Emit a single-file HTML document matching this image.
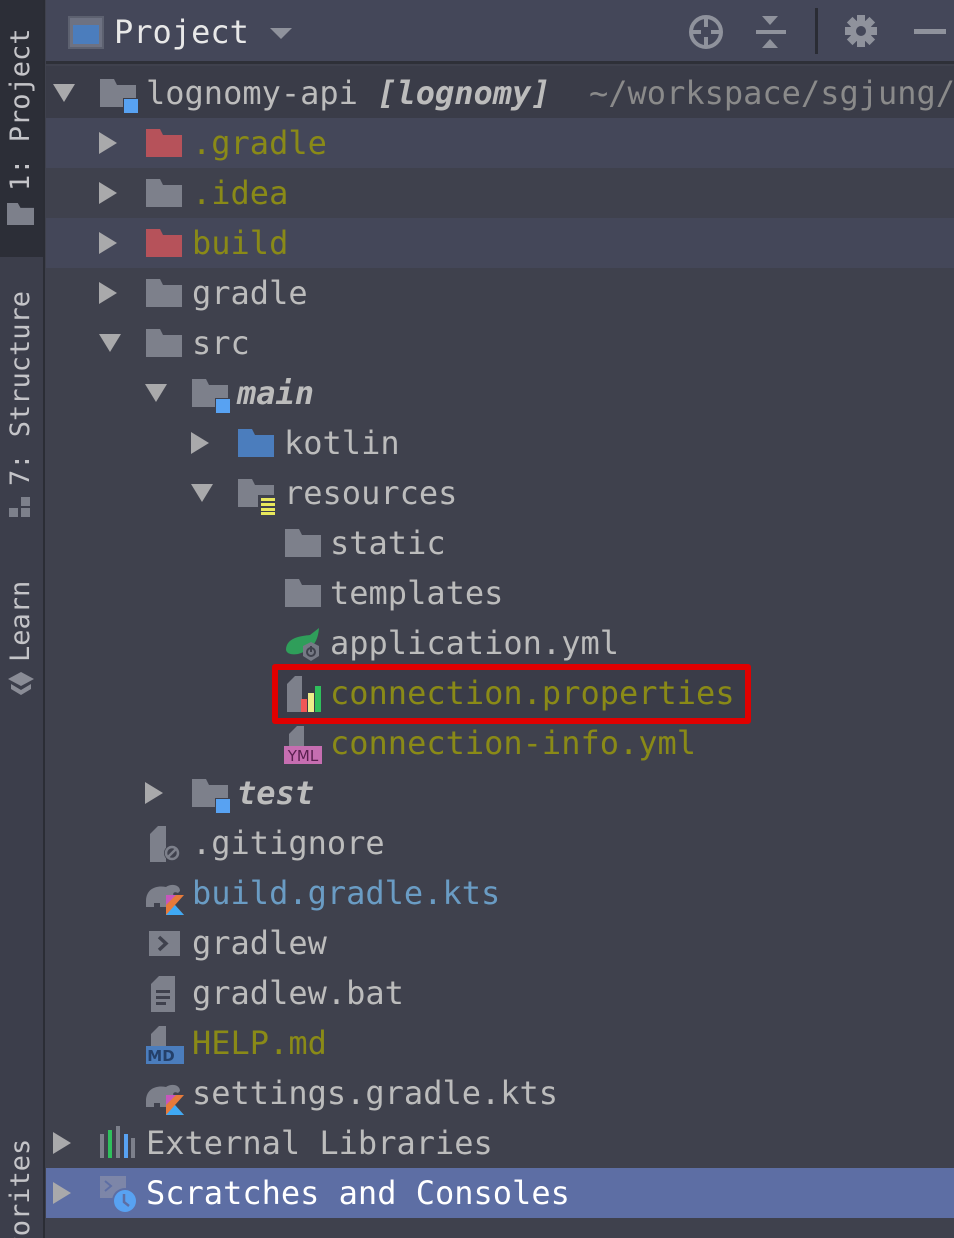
<!DOCTYPE html>
<html style="overflow:hidden;height:1238px"><head><meta charset="utf-8"><style>
*{margin:0;padding:0;box-sizing:border-box}
body{width:954px;height:1238px;background:#3f414d;overflow:hidden;position:relative;font-family:"DejaVu Sans Mono","Liberation Mono",monospace;}
#side{position:absolute;left:0;top:0;width:45px;height:1238px;background:#3c3e4b;border-right:2px solid #2b2d35;overflow:hidden}
#act{position:absolute;left:0;top:0;width:44px;height:257px;background:#2c2e37}
.vt{position:absolute;transform:rotate(-90deg);transform-origin:left top;font-family:"DejaVu Sans Mono",monospace;font-size:27px;line-height:32px;color:#c4c4c8;white-space:nowrap}
#hdr{position:absolute;left:46px;top:0;width:908px;height:64px;background:#444759;border-bottom:3px solid #2e3038}
.row{position:absolute;left:46px;width:908px;height:50px}
.t{position:absolute;font-size:32px;line-height:50px;height:50px;color:#bcbcbc;white-space:nowrap}
.y{color:#8a8a17}.b{color:#6a9cc4}
.arr{position:absolute;width:0;height:0}
.ar{border-left:18px solid #a9a9ab;border-top:11px solid transparent;border-bottom:11px solid transparent;top:14px}
.ad{border-top:18px solid #a9a9ab;border-left:11px solid transparent;border-right:11px solid transparent;top:16px}
</style></head><body>
<div id="side"><div id="act"></div>
<div class="vt" style="left:5px;top:191px">1: Project</div>
<div style="position:absolute;left:7px;top:203px;width:27px;height:22px;background:#7d808b;clip-path:polygon(0 0,40% 0,50% 22%,100% 22%,100% 100%,0 100%)"></div>
<div class="vt" style="left:5px;top:486px">7: Structure</div>
<div style="position:absolute;left:9px;top:497px;width:22px;height:22px">
<div style="position:absolute;left:0;top:11px;width:9px;height:9px;background:#7d808b"></div><div style="position:absolute;left:12px;top:11px;width:9px;height:9px;background:#7d808b"></div><div style="position:absolute;left:12px;top:0;width:9px;height:9px;background:#7d808b"></div></div>
<div class="vt" style="left:5px;top:662px">Learn</div>
<svg style="position:absolute;left:6px;top:670px" width="30" height="28" viewBox="0 0 30 28"><path d="M15 2 L28 9 L15 16 L2 9Z" fill="#8a8c96"/><path d="M5 14 L15 20 L25 14 L25 19 L15 25 L5 19Z" fill="#8a8c96"/></svg>
<div class="vt" style="left:5px;top:1285px">Favorites</div>
</div>
<div id="hdr">
<div style="position:absolute;left:22px;top:16px;width:36px;height:33px;background:#6e7282;border:2px solid #5d6170"></div>
<div style="position:absolute;left:27px;top:25px;width:26px;height:19px;background:#4b7dbd"></div>
<div style="position:absolute;left:68px;top:8px;font-size:32px;line-height:48px;color:#e8e8e8">Project</div>
<div style="position:absolute;left:224px;top:28px;border-top:11px solid #8f929c;border-left:11px solid transparent;border-right:11px solid transparent"></div>
<svg style="position:absolute;left:641px;top:13px" width="38" height="38" viewBox="0 0 38 38"><circle cx="19" cy="19" r="15" fill="none" stroke="#8f929c" stroke-width="4"/><path d="M19 4V14M19 24V34M4 19H14M24 19H34" stroke="#8f929c" stroke-width="4"/></svg>
<svg style="position:absolute;left:708px;top:15px" width="34" height="34" viewBox="0 0 34 34"><path d="M8 1H24L16 10Z M8 33H24L16 24Z" fill="#8f929c"/><rect x="2" y="15" width="30" height="4" fill="#8f929c"/></svg>
<div style="position:absolute;left:769px;top:8px;width:3px;height:46px;background:#2a2c34"></div>
<svg style="position:absolute;left:798px;top:14px" width="34" height="34" viewBox="0 0 34 34"><g fill="#8f929c"><circle cx="17" cy="17" r="11"/><rect x="13" y="1" width="8" height="32"/><rect x="1" y="13" width="32" height="8"/><rect x="13" y="1" width="8" height="32" transform="rotate(45 17 17)"/><rect x="13" y="1" width="8" height="32" transform="rotate(-45 17 17)"/></g><circle cx="17" cy="17" r="5" fill="#444759"/></svg>
<div style="position:absolute;left:868px;top:29px;width:32px;height:5px;background:#8f929c"></div>
</div>

<div class="row" style="top:66px;height:52px;background:#3a3c48"></div>
<div class="row" style="top:118px;background:#444759"></div>
<div class="row" style="top:218px;background:#444759"></div>
<div class="row" style="top:1168px;background:#5d6ea4"></div>

<svg width="0" height="0" style="position:absolute"><defs>
<symbol id="fold" viewBox="0 0 36 28"><path d="M0 0H14L17 6H36V28H0Z"/></symbol>
</defs></svg>

<div class="arr ad" style="left:53px;top:84px"></div>
<svg style="position:absolute;left:100px;top:79px" width="38" height="34"><use href="#fold" width="36" height="28" fill="#7d808b"/><rect x="23" y="19" width="15" height="15" fill="#3a3c48"/><rect x="24" y="20" width="14" height="14" fill="#58a2f2"/></svg>
<div class="t" style="left:146px;top:68px">lognomy-api <b style="font-style:italic">[lognomy]</b></div>
<div class="t" style="left:589px;top:68px;color:#8a8a8a">~/workspace/sgjung/</div>

<div class="arr ar" style="left:99px;top:132px"></div>
<svg style="position:absolute;left:146px;top:129px" width="36" height="28"><use href="#fold" width="36" height="28" fill="#b6525a"/></svg>
<div class="t y" style="left:192px;top:118px">.gradle</div>
<div class="arr ar" style="left:99px;top:182px"></div>
<svg style="position:absolute;left:146px;top:179px" width="36" height="28"><use href="#fold" width="36" height="28" fill="#7d808b"/></svg>
<div class="t y" style="left:192px;top:168px">.idea</div>
<div class="arr ar" style="left:99px;top:232px"></div>
<svg style="position:absolute;left:146px;top:229px" width="36" height="28"><use href="#fold" width="36" height="28" fill="#b6525a"/></svg>
<div class="t y" style="left:192px;top:218px">build</div>
<div class="arr ar" style="left:99px;top:282px"></div>
<svg style="position:absolute;left:146px;top:279px" width="36" height="28"><use href="#fold" width="36" height="28" fill="#7d808b"/></svg>
<div class="t" style="left:192px;top:268px">gradle</div>
<div class="arr ad" style="left:99px;top:334px"></div>
<svg style="position:absolute;left:146px;top:329px" width="36" height="28"><use href="#fold" width="36" height="28" fill="#7d808b"/></svg>
<div class="t" style="left:192px;top:318px">src</div>
<div class="arr ad" style="left:145px;top:384px"></div>
<svg style="position:absolute;left:192px;top:379px" width="38" height="34"><use href="#fold" width="36" height="28" fill="#7d808b"/><rect x="23" y="19" width="15" height="15" fill="#3f414d"/><rect x="24" y="20" width="14" height="14" fill="#58a2f2"/></svg>
<div class="t" style="left:237px;top:368px;font-weight:bold;font-style:italic">main</div>
<div class="arr ar" style="left:191px;top:432px"></div>
<svg style="position:absolute;left:238px;top:429px" width="36" height="28"><use href="#fold" width="36" height="28" fill="#4b7dbd"/></svg>
<div class="t" style="left:284px;top:418px">kotlin</div>
<div class="arr ad" style="left:191px;top:484px"></div>
<svg style="position:absolute;left:238px;top:479px" width="38" height="36"><use href="#fold" width="36" height="28" fill="#7d808b"/><rect x="20" y="16" width="18" height="20" fill="#3f414d"/><g fill="#e8e85c"><rect x="23" y="19" width="14" height="3"/><rect x="23" y="24" width="14" height="3"/><rect x="23" y="29" width="14" height="3"/><rect x="23" y="33" width="14" height="3"/></g></svg>
<div class="t" style="left:284px;top:468px">resources</div>
<svg style="position:absolute;left:285px;top:529px" width="36" height="28"><use href="#fold" width="36" height="28" fill="#7d808b"/></svg>
<div class="t" style="left:330px;top:518px">static</div>
<svg style="position:absolute;left:285px;top:579px" width="36" height="28"><use href="#fold" width="36" height="28" fill="#7d808b"/></svg>
<div class="t" style="left:330px;top:568px">templates</div>
<svg style="position:absolute;left:284px;top:628px" width="40" height="36" viewBox="0 0 40 36"><path d="M2 22C2 10 16 8 26 7L35 0C34 14 28 22 14 26C8 27 3 26 2 22Z" fill="#2f9e5a"/><path d="M27 14L35 18V28L27 33L19 28V18Z" fill="#767985"/><circle cx="27" cy="24" r="4" fill="none" stroke="#3f414d" stroke-width="2"/><rect x="26" y="18" width="2" height="6" fill="#3f414d"/></svg>
<div class="t" style="left:330px;top:618px">application.yml</div>
<div style="position:absolute;left:272px;top:664px;width:479px;height:60px;border:6px solid #e00000;border-radius:3px;background:#3a3c48"></div>
<svg style="position:absolute;left:287px;top:676px" width="38" height="38" viewBox="0 0 38 38"><path d="M0 8L8 0H15V36H0Z" fill="#7d808b"/><rect x="14" y="23" width="6" height="13" fill="#f05656"/><rect x="21" y="17" width="6" height="19" fill="#eded8a"/><rect x="28" y="10" width="6" height="26" fill="#2fbf5c"/></svg>
<div class="t y" style="left:330px;top:668px">connection.properties</div>
<svg style="position:absolute;left:284px;top:726px" width="40" height="40" viewBox="0 0 40 40"><path d="M5 8L13 0H20V20H5Z" fill="#7d808b"/><rect x="0" y="20" width="38" height="18" fill="#c66eb1"/><text x="19" y="35" font-family="DejaVu Sans" font-size="15" fill="#5a2050" text-anchor="middle">YML</text></svg>
<div class="t y" style="left:330px;top:718px">connection-info.yml</div>
<div class="arr ar" style="left:145px;top:782px"></div>
<svg style="position:absolute;left:192px;top:779px" width="38" height="34"><use href="#fold" width="36" height="28" fill="#7d808b"/><rect x="23" y="19" width="15" height="15" fill="#3f414d"/><rect x="24" y="20" width="14" height="14" fill="#58a2f2"/></svg>
<div class="t" style="left:237px;top:768px;font-weight:bold;font-style:italic">test</div>
<svg style="position:absolute;left:150px;top:826px" width="34" height="38" viewBox="0 0 34 38"><path d="M0 8L8 0H16V36H0Z" fill="#7d808b"/><circle cx="22" cy="27" r="8" fill="#3f414d"/><circle cx="22" cy="27" r="6" fill="none" stroke="#7d808b" stroke-width="2.5"/><path d="M17 32L27 22" stroke="#7d808b" stroke-width="2.5"/></svg>
<div class="t" style="left:192px;top:818px">.gitignore</div>
<svg style="position:absolute;left:144px;top:877px" width="42" height="40" viewBox="0 0 42 40"><path d="M2 24C2 12 12 8 22 10C28 6 36 8 36 14L34 16C30 14 28 16 30 20H22V30H16V26H10V30H2Z" fill="#7d808b"/><path d="M22 18L40 18L31 28L40 38H22Z" fill="#e77a3a"/><path d="M22 18H32L22 28Z" fill="#c757bc"/><path d="M22 38L31 28L40 38Z" fill="#3fa9f5"/></svg>
<div class="t b" style="left:192px;top:868px">build.gradle.kts</div>
<div style="position:absolute;left:149px;top:931px;width:31px;height:25px;background:#7d808b"></div>
<svg style="position:absolute;left:149px;top:931px" width="31" height="25"><path d="M10 6L17 12.5L10 19" stroke="#3f414d" stroke-width="3.5" fill="none"/></svg>
<div class="t" style="left:192px;top:918px">gradlew</div>
<svg style="position:absolute;left:151px;top:976px" width="26" height="36" viewBox="0 0 26 36"><path d="M0 8L8 0H24V36H0Z" fill="#7d808b"/><rect x="5" y="14" width="14" height="3" fill="#3f414d"/><rect x="5" y="20" width="14" height="3" fill="#3f414d"/><rect x="5" y="26" width="10" height="3" fill="#3f414d"/></svg>
<div class="t" style="left:192px;top:968px">gradlew.bat</div>
<svg style="position:absolute;left:146px;top:1026px" width="38" height="38" viewBox="0 0 38 38"><path d="M5 8L13 0H20V20H5Z" fill="#7d808b"/><rect x="0" y="20" width="38" height="18" fill="#4b7dbd"/><text x="15" y="35" font-family="DejaVu Sans" font-weight="bold" font-size="15" fill="#24406a" text-anchor="middle">MD</text></svg>
<div class="t y" style="left:192px;top:1018px">HELP.md</div>
<svg style="position:absolute;left:144px;top:1077px" width="42" height="40" viewBox="0 0 42 40"><path d="M2 24C2 12 12 8 22 10C28 6 36 8 36 14L34 16C30 14 28 16 30 20H22V30H16V26H10V30H2Z" fill="#7d808b"/><path d="M22 18L40 18L31 28L40 38H22Z" fill="#e77a3a"/><path d="M22 18H32L22 28Z" fill="#c757bc"/><path d="M22 38L31 28L40 38Z" fill="#3fa9f5"/></svg>
<div class="t" style="left:192px;top:1068px">settings.gradle.kts</div>
<div class="arr ar" style="left:53px;top:1132px"></div>
<svg style="position:absolute;left:100px;top:1126px" width="36" height="32"><g fill="#7d808b"><rect x="0" y="8" width="4" height="24"/><rect x="31" y="12" width="4" height="20"/></g><rect x="8" y="4" width="4" height="28" fill="#2fbf5c"/><rect x="16" y="0" width="4" height="32" fill="#7d808b"/><rect x="24" y="8" width="4" height="24" fill="#58a2f2"/></svg>
<div class="t" style="left:146px;top:1118px">External Libraries</div>
<div class="arr ar" style="left:53px;top:1182px"></div>
<svg style="position:absolute;left:100px;top:1176px" width="40" height="38"><rect x="0" y="0" width="26" height="22" fill="#7d86a8"/><path d="M5 5L11 10L5 15" stroke="#5d6ea4" stroke-width="2" fill="none"/><circle cx="25" cy="25" r="13" fill="#5d6ea4"/><circle cx="25" cy="25" r="11" fill="#58a2f2"/><path d="M24 18V26L29 30" stroke="#5d6ea4" stroke-width="2.5" fill="none"/></svg>
<div class="t" style="left:146px;top:1168px;color:#ffffff">Scratches and Consoles</div>
</body></html>
